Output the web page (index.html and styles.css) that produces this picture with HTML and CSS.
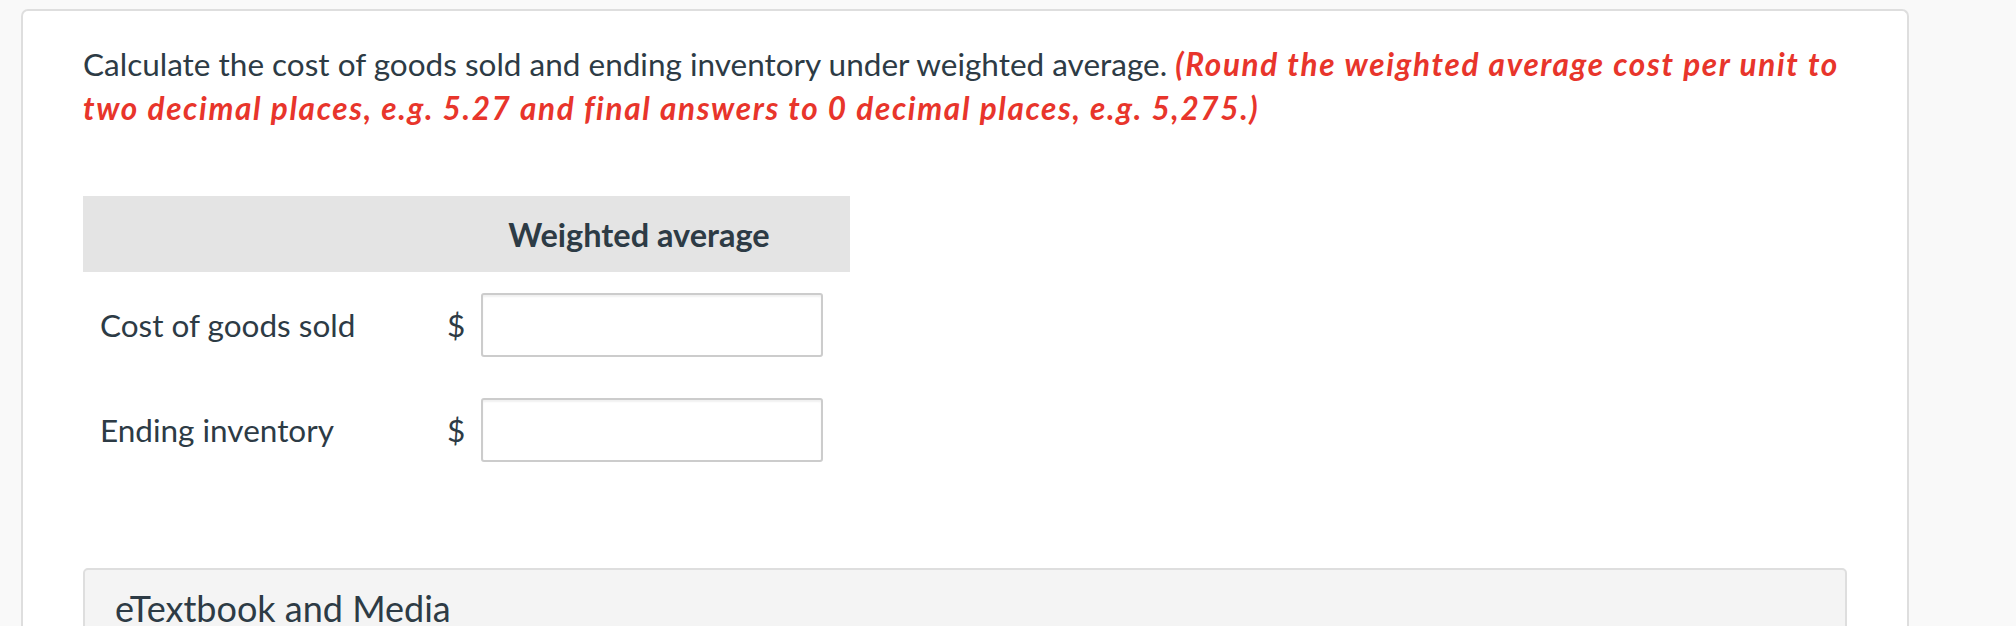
FILE: index.html
```html
<!DOCTYPE html>
<html lang="en">
<head>
<meta charset="utf-8">
<title>Weighted average</title>
<link rel="stylesheet" href="styles.css">
</head>
<body>
<div class="page">
  <div class="card">
    <p class="question">Calculate the cost of goods sold and ending inventory under weighted average. <span class="hint">(Round the weighted average cost per unit to two decimal places, e.g. 5.27 and final answers to 0 decimal places, e.g. 5,275.)</span></p>

    <div class="grid">
      <div class="head-cell"></div>
      <div class="head-cell head-title">Weighted average</div>

      <div class="label">Cost of goods sold</div>
      <div class="value"><span class="dollar">$</span><input class="answer" type="text" aria-label="Cost of goods sold"></div>

      <div class="label">Ending inventory</div>
      <div class="value"><span class="dollar">$</span><input class="answer" type="text" aria-label="Ending inventory"></div>
    </div>

    <div class="media">
      <div class="media-title">eTextbook and Media</div>
    </div>
  </div>
</div>
</body>
</html>
```

FILE: styles.css
```css
html, body {
  margin: 0;
  padding: 0;
}

body {
  background: #f9f9f9;
  font-family: Lato, "Open Sans", sans-serif;
  color: #2d3b45;
  overflow: hidden;
}

.page {
  padding: 9px 107px 0 21px;
}

.card {
  background: #ffffff;
  border: 2px solid #dedede;
  border-bottom: none;
  border-radius: 7px 7px 0 0;
  padding: 31px 60px 60px 60px;
  min-height: 700px;
}

.question {
  margin: 0;
  font-size: 31.5px;
  line-height: 44px;
}

.hint {
  color: #e8352b;
  font-weight: 700;
  font-style: italic;
  letter-spacing: 1.65px;
}

.grid {
  margin-top: 66px;
  width: 767px;
  display: grid;
  grid-template-columns: 345px 422px;
  grid-template-rows: 76px 105px 105px;
}

.head-cell {
  background: #e4e4e4;
}

.head-title {
  display: flex;
  align-items: center;
  justify-content: center;
  font-weight: 700;
  font-size: 32.5px;
}

.label {
  display: flex;
  align-items: center;
  padding-left: 17px;
  font-size: 31.5px;
}

.value {
  display: flex;
  align-items: center;
  padding-left: 19px;
}

.dollar {
  font-size: 31.5px;
  width: 16px;
}

.answer {
  box-sizing: border-box;
  margin-left: 18px;
  width: 342px;
  height: 64px;
  border: 2px solid #cccccc;
  border-radius: 3px;
  box-shadow: inset 0 2px 2px rgba(0, 0, 0, 0.06);
  background: #ffffff;
  font-family: Lato, sans-serif;
  font-size: 28px;
  padding: 0 10px;
  outline: none;
}

.media {
  margin-top: 86px;
  background: #f4f4f4;
  border: 2px solid #dedede;
  border-radius: 5px;
  padding: 16px 30px 30px 30px;
}

.media-title {
  font-size: 36px;
  color: #2d3b45;
}
```
